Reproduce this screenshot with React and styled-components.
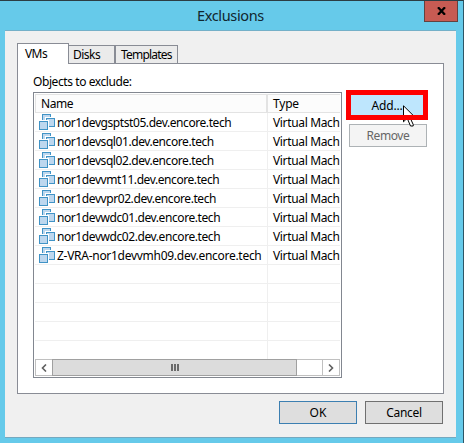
import React from 'react';
import styled, { createGlobalStyle } from 'styled-components';

const Global = createGlobalStyle`
  * { box-sizing: border-box; }
  body { margin: 0; overflow: hidden; font-family: "Noto Sans", "Open Sans", sans-serif; font-size: 12px; color: #000; }
`;

const Window = styled.div`
  width: 464px; height: 443px; background: #66caea;
  border-top: 1px solid #2c3d44; border-right: 1px solid #2c5666;
  display: flex; flex-direction: column; padding: 0 7px 5px 5px;
`;
const TitleBar = styled.header`
  height: 29px; flex: none; display: grid; grid-template-columns: 192px 1fr 34px;
  width: 453px;
`;
const Label = styled.span`
  display: inline-block; white-space: nowrap;
  letter-spacing: ${p => p.$spacing ?? -0.42}px;
`;
const RowLabel = styled(Label)` position: relative; top: 1px; `;
const Title = styled.h1`
  grid-column: 2; margin: 0; font-size: 14.5px; font-weight: 400; line-height: 29px;
  color: #10262e; white-space: nowrap; letter-spacing: -0.35px;
`;
const Close = styled.button`
  grid-column: 3; width: 34px; height: 21px; padding: 0; background: #c75b53;
  border: 1px solid #63413f; border-top: 0; display: flex; align-items: center; justify-content: center;
`;
const Client = styled.main`
  flex: 1; background: #f0f0f0; border-top: 1px solid #74b0c8; border-bottom: 1px solid #74a9c0;
  padding: 12px 12px 0; display: flex; flex-direction: column;
`;
const Tabs = styled.nav`
  height: 21px; display: flex; align-items: flex-end; position: relative; z-index: 1;
  margin-bottom: -1px; flex: none;
`;
const Tab = styled.button`
  font: inherit; text-align: left; padding: 0 0 0 ${p => p.$pad}px; width: ${p => p.$width}px;
  height: ${p => (p.$active ? 21 : 19)}px; line-height: ${p => (p.$active ? 17 : 18)}px;
  background: ${p => (p.$active ? '#fff' : '#ebebeb')};
  border: 1px solid #898c95; border-bottom: ${p => (p.$active ? '0' : '1px solid #898c95')};
  border-left-width: ${p => (p.$joined ? 0 : 1)}px;
  display: flex; align-items: center;
  padding-bottom: ${p => (p.$active ? 1 : 0)}px;
`;
const Panel = styled.section`
  width: 427px; height: 331px; background: #fff; border: 1px solid #898c95;
  padding: 8px 15px 0; flex: none;
`;
const Caption = styled.div` height: 20px; line-height: 20px; `;
const Columns = styled.div` display: flex; align-items: flex-start; `;
const List = styled.div`
  width: 309px; height: 286px; flex: none; border: 1px solid #828790; padding: 1px; background: #fff;
`;
const Grid = styled.div` height: 265px; overflow: hidden; `;
const Row = styled.div`
  height: 19px; display: grid; grid-template-columns: 233px 72px; border-bottom: 1px solid #efefef;
  &:last-child { border-bottom: 0; }
`;
const HeaderRow = styled(Row)`
  background: #fcfcfc; border: 1px solid #e3e3e3; border-width: 1px 0 1px 1px;
  grid-template-columns: 232px 72px;
`;
const Cell = styled.div`
  display: flex; align-items: center; white-space: nowrap; line-height: 18px;
  padding-left: ${p => p.$pad || 0}px; border-right: ${p => (p.$rule ? `${p.$rule}px solid ${p.$color || '#efefef'}` : 0)};
`;
const VmGlyph = styled.svg` width: 16px; height: 16px; flex: none; margin-right: 2px; `;
const ScrollBar = styled.div`
  height: 17px; display: flex; border: 1px solid #c0c0c0; background: #fff;
`;
const Arrow = styled.button`
  width: ${p => (p.$end ? 17 : 16)}px; padding: 0; border: 0; background: #fff; display: flex; align-items: center; justify-content: center;
  border-left: ${p => (p.$end ? '1px solid #c0c0c0' : '0')}; margin-left: ${p => (p.$end ? 'auto' : 0)};
`;
const Thumb = styled.div`
  width: 245px; height: 17px; margin-top: -1px; background: #dcdcdc; border: 1px solid #a0a0a0;
  display: flex; gap: 1px; align-items: center; justify-content: center;
`;
const Grip = styled.i` width: 2px; height: 7px; background: #6b6b6b; `;
const Actions = styled.div` position: relative; margin: -2px 0 0 4px; display: flex; flex-direction: column; gap: 4px; `;
const Button = styled.button`
  font: inherit; width: 78px; height: 23px; padding: 0 0 1px; display: flex; align-items: center; justify-content: center;
  background: ${p => (p.$muted ? '#f4f4f4' : '#dedede')};
  border: 1px solid ${p => (p.$muted ? '#adb2b5' : p.$primary ? '#3c7fb1' : '#707070')};
  color: ${p => (p.$muted ? '#666' : '#000')};
  margin-left: ${p => (p.$muted ? 3 : 0)}px;
`;
const AddButton = styled(Button)`
  width: 82px; height: 30px; border: 5px solid #fe0000; background: #bee6fd; padding-bottom: 0;
`;
const Pointer = styled.svg` position: absolute; left: 57px; top: 15px; width: 13px; height: 22px; `;
const Highlight = styled.div`
  position: absolute; left: 0; top: 0; width: 82px; height: 30px; border: 5px solid #fe0000; pointer-events: none;
`;
const Footer = styled.footer` display: flex; justify-content: flex-end; gap: 8px; margin: 7px 1px 0 0; `;

const machines = [
  { name: 'nor1devgsptst05.dev.encore.tech' },
  { name: 'nor1devsql01.dev.encore.tech' },
  { name: 'nor1devsql02.dev.encore.tech' },
  { name: 'nor1devvmt11.dev.encore.tech' },
  { name: 'nor1devvpr02.dev.encore.tech' },
  { name: 'nor1devwdc01.dev.encore.tech' },
  { name: 'nor1devwdc02.dev.encore.tech' },
  { name: 'Z-VRA-nor1devvmh09.dev.encore.tech', spacing: -0.28 },
];

const VmIcon = () => (
  <VmGlyph viewBox="0 0 16 16" shapeRendering="crispEdges" fill="#bdd7ee" stroke="#4093c6">
    <rect x="3.5" y=".5" width="8" height="8" />
    <rect x="6" y="3" width="10" height="11" fill="#fff" stroke="none" />
    <rect x="7.5" y="4.5" width="8" height="8" />
    <rect x="0" y="6" width="10" height="10" fill="#fff" stroke="none" />
    <rect x=".5" y="7.5" width="8" height="8" />
  </VmGlyph>
);
const Chevron = ({ right }) => (
  <svg width="6" height="8" viewBox="0 0 6 8" fill="none" stroke="#606060" strokeWidth="1.6">
    <path d={right ? 'M1 .5 4.5 4 1 7.5' : 'M5 .5 1.5 4 5 7.5'} />
  </svg>
);

export default function App() {
  return (
    <>
      <Global />
      <Window>
        <TitleBar>
          <Title>Exclusions</Title>
          <Close aria-label="Close">
            <svg width="9" height="8" viewBox="0 0 9 8" stroke="#000" strokeWidth="2.2"><path d="M1 .2 8 7.8M8 .2 1 7.8" /></svg>
          </Close>
        </TitleBar>
        <Client>
          <Tabs>
            <Tab $active $width={52} $pad={7}><Label $spacing={-0.6}>VMs</Label></Tab>
            <Tab $joined $width={46} $pad={4}><Label $spacing={-0.5}>Disks</Label></Tab>
            <Tab $width={63} $pad={5}><Label $spacing={-0.8}>Templates</Label></Tab>
          </Tabs>
          <Panel>
            <Caption><Label>Objects to exclude:</Label></Caption>
            <Columns>
              <List>
                <Grid>
                  <HeaderRow>
                    <Cell $pad={5} $rule={2} $color="#e3e3e3"><Label>Name</Label></Cell>
                    <Cell $pad={5}><Label $spacing={-0.2}>Type</Label></Cell>
                  </HeaderRow>
                  {machines.map(({ name, spacing }) => (
                    <Row key={name}>
                      <Cell $pad={4} $rule={1}><VmIcon /><RowLabel $spacing={spacing}>{name}</RowLabel></Cell>
                      <Cell $pad={5}><RowLabel $spacing={-0.35}>Virtual Mach</RowLabel></Cell>
                    </Row>
                  ))}
                  {[0, 1, 2, 3, 4].map(n => <Row key={n}><Cell $rule={1} /><Cell /></Row>)}
                </Grid>
                <ScrollBar>
                  <Arrow aria-label="Scroll left"><Chevron /></Arrow>
                  <Thumb><Grip /><Grip /><Grip /></Thumb>
                  <Arrow $end aria-label="Scroll right"><Chevron right /></Arrow>
                </ScrollBar>
              </List>
              <Actions>
                <AddButton><Label $spacing={-0.2}>Add...</Label></AddButton>
                <Button $muted><Label>Remove</Label></Button>
                <Pointer viewBox="0 0 13 22" fill="#fff" stroke="#000">
                  <path d="M.5.8v16l3.7-3.6 3.3 7.8h2.7v-1.5L6.8 12h5Z" />
                </Pointer>
                <Highlight />
              </Actions>
            </Columns>
          </Panel>
          <Footer>
            <Button $primary>OK</Button>
            <Button><Label $spacing={-0.3}>Cancel</Label></Button>
          </Footer>
        </Client>
      </Window>
    </>
  );
}
